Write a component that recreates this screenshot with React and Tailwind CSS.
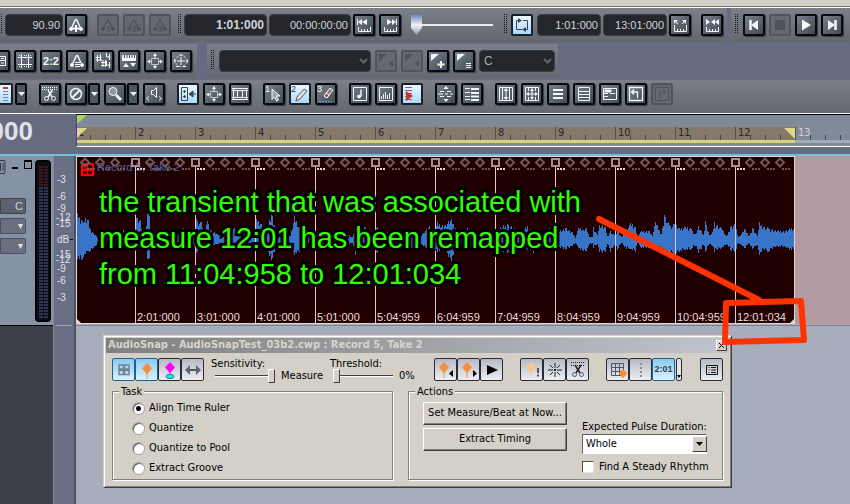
import { useState } from 'react';
import clsx from 'clsx';

// 18x18 toolbar glyphs, drawn with currentColor
const GLYPHS = {
  grid: <path d="M2.5 4.5h13v9h-13zM9.5 4v9M2 8.5h13M5 6.5h3M11 6.5h3M5 11h3M11 11h3" />,
  film: <path d="M2 5.5h14M2 12.5h14M5.5 2v14M12.5 2v14M3.5 3v1M8.5 3v1M10.5 3v1M14.5 3v1M3.5 14v1M8.5 14v1M10.5 14v1M14.5 14v1" />,
  metroPlus: (
    <>
      <path d="M8.5 3.5h1L14 13M8.5 3.5L4 13" strokeWidth="1.5" />
      <circle cx="4" cy="13" r="1.5" fill="currentColor" /><circle cx="14" cy="13" r="1.5" fill="currentColor" />
      <path d="M9 9v7M5.5 12.5h7" strokeWidth="2" />
    </>
  ),
  metroLines: (
    <>
      <path d="M8.5 3.5h1L13 11M8.5 3.5L4 13" strokeWidth="1.5" />
      <circle cx="4" cy="13" r="1.5" fill="currentColor" /><circle cx="14" cy="13" r="1.5" fill="currentColor" />
      <path d="M7 10.5h5M7 12.5h5M7 14.5h5" />
    </>
  ),
  sharps: <path d="M3.5 3v7M6.5 2v7M1.5 5.5h6M2 8h6M9 8v7M11.5 8v7M7 10.5h6M7 13.5h6M12.5 1v4h4M15.5 2v6M12.5 9v4h4M15.5 10v6" />,
  keys: (
    <>
      <path d="M2.5 3.5h13v5h-13z" fill="currentColor" />
      <path d="M4.5 3v3M7 3v3M9.5 3v3M12 3v3M14.5 3v3" stroke="#46505a" />
      <path d="M3 15l3-4 3 4zM10 11h6l-3 4z" fill="currentColor" stroke="none" />
    </>
  ),
  boxArrows: (
    <>
      <path d="M5.5 6.5h7v6h-7z" stroke="#c4c8cc" />
      <path d="M9 1l2 3H7zM9 17l2-3H7zM1 9.5l3-2v4zM17 9.5l-3-2v4z" fill="currentColor" stroke="none" />
      <path d="M9 3v3M9 13v3M2 9.5h3M13 9.5h3" />
    </>
  ),
  circleArrows: (
    <>
      <circle cx="9" cy="9" r="5.5" stroke="#c4c8cc" strokeDasharray="3 1" />
      <path d="M9 5v8M5 9h8M7.5 3h3M2.5 7.5v3M15.5 7.5v3M4 14.5h3M11 14.5h3" />
    </>
  ),
  scissors: (
    <>
      <path d="M1 2.5h16M1 4.5h16" strokeDasharray="1 1" />
      <path d="M7 5l4 7M11.5 5L7 12" strokeWidth="1.5" />
      <circle cx="5.5" cy="13.5" r="2" /><circle cx="12.5" cy="13.5" r="2" />
    </>
  ),
  mute: <><circle cx="9" cy="9" r="5.5" strokeWidth="1.5" /><path d="M5.5 12.5l7-7" strokeWidth="2" /></>,
  zoom: <><circle cx="7" cy="6.5" r="4" fill="#8e98a2" /><path d="M10 10l5 5" strokeWidth="3" /></>,
  speaker: <path d="M6.5 5.5h2l3-3v10l-3-3h-2zM4 11.5l-2.5 2L4 15.5M14 11.5l2.5 2-2.5 2" />,
  dock: <><path d="M2.5 2.5h6v13h-6z" /><path d="M4 6.5h3M5.5 5v3M4 11.5h3M5.5 10v3M11 9h6" /><path d="M10 9l4-3v6z" fill="currentColor" /></>,
  strip: <path d="M1 3.5h16M1 5.5h16M1 12.5h16M1 14.5h16M2.5 3v12M6.5 6v7M11.5 6v7M15.5 3v12" />,
  select: <><text x="0" y="7" fontSize="9" stroke="none" fill="currentColor">1</text><path d="M7 4l8 7h-3.5l2 4-2 1-2-4L7 14.500z" fill="#9aa2aa" /></>,
  pencil: <><text x="0" y="7" fontSize="9" stroke="none" fill="#333">2</text><path d="M5 16l1-4 7-8 3 2-7 8z" fill="#dde2e8" stroke="#555e66" /></>,
  eraser: (
    <>
      <text x="0" y="7" fontSize="9" stroke="none" fill="currentColor">3</text>
      <path d="M7 11l6-8 3 2-6 8z" fill="#8a8488" /><path d="M7 11l2-3 3 2-2 3z" fill="#a04040" />
      <path d="M2 16.5h13" stroke="#5b9be0" strokeDasharray="2 1" />
    </>
  ),
  note: <><path d="M2.5 2.5h13v13h-13z" /><path d="M10 4.500v7" strokeWidth="1.5" /><circle cx="8" cy="11.5" r="1.5" fill="currentColor" /></>,
  bars: <path d="M2.5 2.5h13v13h-13zM4.500 11v3M6.5 9v5M8.5 7v7M10.5 10v4M12.5 8v6" />,
  record: <><path d="M2 2.5h7M2 5.5h7M2 8.5h7M2 11.5h7M2 14.5h7" stroke="#b05060" /><path d="M3 6l7 5-7 5z" fill="#c03828" stroke="none" /></>,
  spread: <><path d="M3 6.5h4M10 6.5h4M1 9h5M8 9h3M13 9h3M3 11.5h4M10 11.500h4" /><path d="M9 1l2.5 3h-5zM9 17l2.5-3h-5z" fill="currentColor" stroke="none" /></>,
  stack: <><path d="M2 3.5h5M2 7.5h5M2 11.5h5M2 14.5h5" /><path d="M8 4h8M8 8h8M8 11.5h8M8 15h8" strokeWidth="2" /></>,
  fitV: <><path d="M2.5 2.5h13v13h-13zM9 5v8M5.5 3v12M12.500 3v12" /><path d="M9 3l2.5 3h-5zM9 15l2.5-3h-5z" fill="currentColor" stroke="none" /></>,
  fitAll: <><path d="M2.5 2.5h13v13h-13zM9 4v10M4 9h10" /><path d="M9 3l2 3H7zM9 15l2-3H7zM3 9l3-2v4zM15 9l-3-2v4z" fill="currentColor" stroke="none" /><path d="M5.500 3v3M12.500 3v3M5.500 12v3M12.500 12v3" /></>,
  lines: <path d="M4 5h10M4 9h10M4 13h10" strokeWidth="2" />,
  boxLines: <path d="M3.5 2.5h11v13h-11zM4 6.5h10M4 9.5h10M4 12.5h10" />,
  boxSplit: <><path d="M2.5 3.5h13v11h-13zM3 8.5h4M9 8.5h5M3 11.5h4" /><path d="M4 5h6v2H4z" fill="currentColor" /></>,
  boxBack: <path d="M2.5 2.5h13v13h-13zM10.5 13V7h-6M7 4.500L4.500 7 7 9.500" strokeWidth="1.3" />,
  boxForward: <path d="M2.5 2.5h13v13h-13zM6.5 13V7h6M10 4.500L12.500 7 10 9.500" />,
  rulerBack: <><path d="M3.5 11v4.500h12V11M6.5 13v2M9.5 13v2M12.5 13v2M2.500 3v6" /><path d="M7 3v6L3 6zM12 3v6L7 6z" fill="currentColor" stroke="none" /></>,
  rulerForward: <><path d="M3.5 11v4.500h12V11M6.5 13v2M9.5 13v2M12.5 13v2M15.5 3v6" /><path d="M6 3v6l5-3zM11 3v6l4-3z" fill="currentColor" stroke="none" /></>,
  rulerOut: <><path d="M3.5 9v6.500h12V9M6.5 13v2M9.5 13v2M12.5 13v2M7 8L4 5M11 8l3-3" /><path d="M3 4h4L3 8zM15 4h-4l4 4z" fill="currentColor" stroke="none" /></>,
  rulerIn: <><path d="M3.5 11v4.500h12V11M6.5 13v2M9.5 13v2M12.5 13v2" /><path d="M3 3l4 3-4 3zM12 3v6L8 6zM16 3v6l-4-3z" fill="currentColor" stroke="none" /></>,
  corner: <path d="M2 2h8l-8 8zM16 8v7l-4-3.5z" fill="currentColor" stroke="none" />,
  cornerPlus: <><path d="M2 2h8l-8 7z" fill="currentColor" stroke="none" /><path d="M12 9v7M8.5 12.5h7" strokeWidth="2" /></>,
  cornerLines: <><path d="M2 2h8l-8 7z" fill="currentColor" stroke="none" /><path d="M11 11.5h5M11 13.5h5M11 15.5h5" /></>,
  loop: <><path d="M9 13.5H3.5v-9H8M10 4.5h4.5v9H13" /><path d="M5 2l4 2.500-4 2.500zM13 11v5l-4-2.500z" fill="currentColor" stroke="none" /></>,
  start: <><path d="M5.500 4v10" strokeWidth="2.5" /><path d="M13 4v10L6 9z" fill="currentColor" stroke="none" /></>,
  end: <><path d="M12.500 4v10" strokeWidth="2.5" /><path d="M5 4v10l7-5z" fill="currentColor" stroke="none" /></>,
  stop: <path d="M4 4h10v10H4z" fill="currentColor" stroke="none" />,
  play: <path d="M5 3.500v11L14 9z" fill="currentColor" stroke="none" />,
  rows: (
    <>
      <path d="M3 3h4M10 3h5" stroke="#b04050" strokeWidth="2" />
      <path d="M3 6.5h4M10 6.5h5M3 9.5h4M10 9.5h5M3 12.5h4M10 12.5h5M3 15.5h4M10 15.5h5" stroke="#7a8894" />
    </>
  ),
};

const metroNumber = (n) => (
  <>
    <path d="M9 3.5L14 13M9 3.5L4 13" strokeWidth="1.5" />
    <circle cx="4" cy="13" r="1.5" fill="currentColor" /><circle cx="14" cy="13" r="1.5" fill="currentColor" />
    <text x="7" y="16" fontSize="8" fontWeight="bold" stroke="none" fill="currentColor">{n}</text>
  </>
);

const ToolButton = ({ icon, label, on, off, children }) => (
  <button
    aria-label={label || icon}
    disabled={off}
    className={clsx(
      'h-[22px] w-[22px] shrink-0 rounded-xs border-2',
      on && 'border-[#17202a] bg-linear-to-b from-[#edf8ff] to-[#a9dafa] text-[#3d4650]',
      off && 'border-[#50545c] bg-[#64686f] text-[#4e5259]',
      !on && !off && 'border-[#08090b] bg-linear-to-br from-[#77818b] to-[#414b55] text-[#f4f6f8] shadow-[1px_1px_1px_#3a3d45]'
    )}
  >
    {children || (
      <svg viewBox="0 0 18 18" className="h-[18px] w-[18px]" fill="none" stroke="currentColor" fontFamily="Liberation Sans, sans-serif">
        {GLYPHS[icon]}
      </svg>
    )}
  </button>
);

const MiniDrop = ({ label }) => (
  <button aria-label={label} className="flex h-[22px] w-3 shrink-0 items-center justify-center rounded-xs border-2 border-[#08090b] bg-[#4d5762]">
    <svg viewBox="0 0 7 4" className="w-[7px] shrink-0"><path d="M0 0h7L3.5 4z" fill="#f0f2f4" /></svg>
  </button>
);

const Grip = () => (
  <span className="h-5 w-[5px] shrink-0 self-start bg-[conic-gradient(#15171b_25%,transparent_0)] bg-[size:2px_2px]" />
);

const LcdField = ({ label, value, bold, className }) => (
  <input
    aria-label={label}
    defaultValue={value}
    className={clsx(
      "h-[22px] shrink-0 rounded-sm border border-[#3c3e46] bg-[#24262c] pr-[2px] text-right font-['Liberation_Sans',sans-serif] text-[#d2d4dc] outline-none",
      bold ? 'text-[12px] font-bold' : 'text-[11px]',
      className
    )}
  />
);

const LcdSelect = ({ label, value, className }) => (
  <span className={clsx('relative flex shrink-0', className)}>
    <select aria-label={label} defaultValue={value} className="h-[22px] w-full appearance-none rounded-sm border border-[#3c3e46] bg-[#24262c] pl-1 font-['Liberation_Sans',sans-serif] text-[12px] text-[#a9abb2] outline-none">
      <option>{value}</option>
    </select>
    <svg viewBox="0 0 9 6" className="pointer-events-none absolute top-2 right-[3px] w-[9px]">
      <path d="M1 1l3.5 3.5L8 1" fill="none" stroke="#666870" strokeWidth="2" />
    </svg>
  </span>
);

const PANEL = 'bg-linear-to-b from-[#7b7f88] to-[#64676e]';

const TransportBar = () => (
  <div className="flex h-[34px] gap-1">
    <div className={clsx('flex shrink-0 items-start gap-[2px] pt-[6px] pr-1', PANEL)}>
      <span className="flex w-[3px] overflow-hidden"><Grip /></span>
      <LcdField label="Tempo" value="90.90" className="w-[58px]" />
      <ToolButton icon="metroPlus" label="Insert tempo" />
      <div className="ml-2 flex gap-1">
        {['1', '2', '3'].map(n => (
          <ToolButton key={n} off label={`Tempo ratio ${n}`}>
            <svg viewBox="0 0 18 18" className="h-[18px] w-[18px]" fill="none" stroke="currentColor">{metroNumber(n)}</svg>
          </ToolButton>
        ))}
      </div>
      <div className="ml-1 flex gap-[2px]">
        <Grip />
        <LcdField label="Now time" value="1:01:000" bold className="w-[83px]" />
        <LcdField label="SMPTE time" value="00:00:00:00" className="w-[82px]" />
      </div>
      <div className="flex gap-1">
        <ToolButton icon="rulerBack" />
        <ToolButton icon="rulerForward" />
      </div>
      <input
        type="range"
        aria-label="Position"
        defaultValue="0"
        className="ml-2 h-[22px] w-[84px] appearance-none bg-[linear-gradient(#e8eaee,#e8eaee)] bg-[size:80px_2px] bg-center bg-no-repeat [&::-webkit-slider-thumb]:h-[20px] [&::-webkit-slider-thumb]:w-[11px] [&::-webkit-slider-thumb]:appearance-none [&::-webkit-slider-thumb]:bg-linear-to-b [&::-webkit-slider-thumb]:from-[#6f88b8] [&::-webkit-slider-thumb]:via-[#f2f4f8] [&::-webkit-slider-thumb]:to-[#8a9ab8] [&::-webkit-slider-thumb]:[clip-path:polygon(0_0,100%_0,100%_65%,50%_100%,0_65%)]"
      />
      <div className="ml-[6px] flex gap-[3px]">
        <Grip />
        <ToolButton icon="loop" label="Loop" on />
      </div>
      <LcdField label="Loop start" value="1:01:000" className="ml-[2px] w-16" />
      <LcdField label="Loop end" value="13:01:000" className="w-16" />
      <div className="flex gap-[10px]">
        <ToolButton icon="rulerOut" />
        <ToolButton icon="rulerIn" />
      </div>
    </div>
    <div className={clsx('flex flex-1 gap-1 pt-[6px] pl-[3px]', PANEL)}>
      <Grip />
      <ToolButton icon="start" label="Rewind" />
      <ToolButton icon="stop" label="Stop" off />
      <ToolButton icon="play" label="Play" />
      <ToolButton icon="end" label="Go to end" />
    </div>
  </div>
);

const ViewBar = () => (
  <div className="mt-[2px] flex h-[34px] gap-[10px]">
    <div className={clsx('flex w-[197px] shrink-0 pt-[6px]', PANEL)}>
      <div className="-ml-3 flex gap-1">
        <ToolButton icon="grid" />
        <ToolButton icon="film" />
        <ToolButton label="Ratio">
          <span className="block text-center font-['Liberation_Sans',sans-serif] text-[11px] leading-[18px] font-bold">2:2</span>
        </ToolButton>
        <ToolButton icon="metroLines" />
        <ToolButton icon="sharps" />
        <ToolButton icon="keys" />
        <ToolButton icon="boxArrows" />
        <ToolButton icon="circleArrows" />
      </div>
    </div>
    <div className={clsx('flex gap-1 pt-[6px] pr-[3px] pl-[3px]', PANEL)}>
      <Grip />
      <LcdSelect label="Preset" value="" className="w-[152px]" />
      <ToolButton icon="corner" label="Previous marker" off />
      <ToolButton icon="corner" label="Next marker" off />
      <ToolButton icon="cornerPlus" label="Insert marker" />
      <ToolButton icon="cornerLines" label="Marker list" />
      <LcdSelect label="Key" value="C" className="w-[76px]" />
    </div>
  </div>
);

const EditBar = () => (
  <div className={clsx('mt-[2px] flex h-[33px] pt-[3px]', PANEL)}>
    <div className="-ml-[9px] flex gap-3">
      <div className="flex gap-[2px]">
        <ToolButton icon="rows" on />
        <MiniDrop label="View options" />
      </div>
      <div className="flex gap-1">
        <ToolButton icon="scissors" />
        <div className="flex gap-px"><ToolButton icon="mute" /><MiniDrop label="Mute options" /></div>
        <div className="flex gap-px"><ToolButton icon="zoom" /><MiniDrop label="Zoom options" /></div>
        <ToolButton icon="speaker" />
      </div>
      <div className="flex gap-1">
        <ToolButton icon="dock" on />
        <ToolButton icon="boxArrows" />
        <ToolButton icon="strip" />
      </div>
      <div className="flex gap-1">
        <ToolButton icon="select" />
        <ToolButton icon="pencil" on />
        <ToolButton icon="eraser" />
      </div>
      <div className="flex gap-1">
        <ToolButton icon="note" />
        <ToolButton icon="bars" />
        <ToolButton icon="record" on />
      </div>
      <div className="flex gap-1">
        <ToolButton icon="spread" />
        <ToolButton icon="stack" />
      </div>
      <div className="flex gap-1">
        <ToolButton icon="fitV" />
        <ToolButton icon="fitAll" />
        <ToolButton icon="lines" />
        <ToolButton icon="boxLines" />
        <ToolButton icon="boxSplit" />
        <ToolButton icon="boxBack" />
        <ToolButton icon="boxForward" off />
      </div>
    </div>
  </div>
);

const MEASURES = ['1', '2', '3', '4', '5', '6', '7', '8', '9', '10', '11', '12', '13'];

const TimeRuler = () => (
  <div className="flex h-[41px] border-t border-white bg-[#666b80]">
    <div className="flex w-[76px] shrink-0 justify-end pr-[43px] font-['Liberation_Sans',sans-serif] text-[26px] leading-[34px] font-bold text-[#e0e1e8]">
      1:01:000
    </div>
    <div className="relative h-[33px] min-w-0 flex-1 overflow-hidden border-t border-b border-t-black border-b-white border-l border-l-[#5a28d0] bg-[#808a99] pt-3">
      <div className="-ml-[2px] flex">
        {MEASURES.map(m => (
          <div
            key={m}
            className={clsx(
              "flex h-4 w-[60px] shrink-0 border-b-[3px] font-['DejaVu_Sans_Condensed','DejaVu_Sans',sans-serif] text-[11px] leading-[11px]",
              m === '13' ? 'border-[#a0abbb] text-[#dcd0d4]' : 'border-[#d8d27a] bg-[#85796a] text-[#2b2824]'
            )}
          >
            <span className="w-[15px] border-l border-[#5b5145] pl-[2px]">{m}</span>
            <span className="mt-2 w-[15px] border-l border-[#4b4540]" />
            <span className="mt-2 w-[15px] border-l border-[#4b4540]" />
            <span className="mt-2 w-[15px] border-l border-[#4b4540]" />
          </div>
        ))}
      </div>
      <svg viewBox="0 0 730 28" className="absolute top-0 left-0 h-7 w-[730px]">
        <path d="M0 0h10L0 9z" fill="#a6e03c" />
        <path d="M0 13h10L0 23zM707 13h11v11z" fill="#dcd98c" />
      </svg>
    </div>
  </div>
);

// x offset in the clip, peak above and peak below the centre line
const PEAKS = [
  [0, 27, 19], [4, 20, 20], [6, 17, 17], [8, 22, 14], [11, 20, 11], [12, 12, 12], [15, 8, 9], [18, 5, 6], [21, 1, 1], [26, 4, 3],
  [36, 3, 3], [46, 10, 4], [50, 5, 5], [58, 3, 4], [59, 22, 10], [63, 20, 8], [65, 6, 5], [68, 11, 8], [70, 26, 19], [72, 24, 18], [73, 5, 6],
  [78, 2, 2], [98, 3, 3], [106, 12, 7], [110, 6, 9], [116, 4, 4], [119, 21, 13], [124, 18, 8], [127, 5, 4], [130, 19, 11], [134, 9, 6],
  [140, 6, 4], [147, 5, 10], [152, 6, 4], [157, 12, 5], [164, 5, 5], [173, 10, 8], [177, 6, 6], [179, 21, 8], [184, 16, 8], [188, 7, 6],
  [194, 26, 20], [197, 15, 12], [200, 7, 8], [207, 9, 9], [213, 4, 5], [217, 24, 15], [222, 13, 12], [225, 8, 4], [234, 4, 4], [248, 9, 7],
  [258, 4, 5], [267, 8, 5], [275, 3, 3], [278, 15, 15], [281, 6, 5], [287, 13, 9], [294, 6, 5], [300, 13, 13], [306, 7, 6], [316, 10, 10],
  [324, 5, 5], [334, 10, 8], [343, 4, 5], [352, 14, 9], [356, 5, 5], [360, 18, 12], [367, 14, 9], [374, 21, 21], [378, 12, 10], [384, 6, 5],
  [390, 12, 8], [398, 5, 5], [406, 9, 6], [414, 5, 4], [420, 11, 8], [430, 16, 13], [434, 14, 9], [442, 6, 5], [450, 14, 10], [456, 8, 13],
  [464, 5, 6], [472, 12, 9], [480, 9, 8], [488, 12, 9], [495, 8, 6], [498, 2, 3], [501, 12, 8], [506, 10, 11], [509, 12, 11], [512, 3, 4],
  [515, 3, 3], [516, 13, 8], [520, 5, 4], [522, 15, 12], [528, 13, 12], [530, 4, 4], [533, 9, 12], [537, 5, 5], [540, 10, 10], [544, 3, 3],
  [549, 11, 9], [553, 17, 9], [558, 13, 12], [560, 4, 3], [564, 9, 8], [572, 9, 8], [575, 4, 4], [578, 18, 11], [584, 6, 8], [587, 25, 12],
  [592, 15, 13], [597, 16, 14], [602, 12, 12], [608, 13, 10], [614, 11, 9], [618, 6, 6], [621, 14, 13], [626, 5, 5], [628, 19, 12],
  [632, 5, 4], [635, 8, 6], [637, 18, 12], [644, 12, 8], [649, 4, 4], [653, 13, 10], [658, 16, 12], [661, 3, 3], [667, 11, 8], [672, 5, 4],
  [675, 12, 9], [680, 4, 5], [682, 18, 15], [686, 13, 9], [691, 12, 12], [698, 10, 7], [706, 9, 7], [714, 12, 10], [717, 13, 10],
];

const waveform = () => {
  let d = '';
  for (let i = 0; i < PEAKS.length - 1; i++) {
    const [x0, u0, l0] = PEAKS[i];
    const [x1, u1, l1] = PEAKS[i + 1];
    for (let x = x0; x < x1; x++) {
      const t = (x - x0) / (x1 - x0);
      const jag = x === x0 ? 1 : 0.72 + ((x * 37) % 11) / 30;
      const up = Math.max(1, Math.round((u0 + (u1 - u0) * t) * jag));
      const low = Math.max(1, Math.round((l0 + (l1 - l0) * t) * jag));
      d += `M${x} ${83 - up}h1v${up + low}h-1z`;
    }
  }
  return d;
};

// marker centres; the first three sit a little ahead of the grid
const BEATS = [...Array(47).keys()].map(i => ({ x: (i + 1) * 15 - (i < 3 ? 7 : 2), bar: (i + 1) % 4 === 0 }));

const LABELS = ['', '2:01:000', '3:01:000', '4:01:000', '5:01:000', '5:04:959', '6:04:959', '7:04:959', '8:04:959', '9:04:959', '10:04:959', '12:01:034'];

const AudioClip = () => (
  <div className="relative flex h-[168px] w-[719px] shrink-0 flex-col justify-end overflow-hidden border border-[#ecd0d2] bg-[#200000]">
    <div className="absolute top-[5px] left-1 flex items-start gap-[3px]">
      <svg viewBox="0 0 13 13" className="mt-px h-[13px] w-[13px]">
        <path d="M0 0h13v13H0z" fill="#f00" />
        <path d="M2 2h4v3H4v1H2zM7 2h4v4H9V5H7zM2 8h4v3H2zM7 8h4v3H7z" fill="#400" />
      </svg>
      <span className="font-['Liberation_Sans',sans-serif] text-[11px] leading-[10px] text-[#4067b8]">Record 5, Take 2</span>
    </div>
    <svg viewBox="0 0 717 166" className="absolute top-0 left-0 h-[166px] w-[717px]" fill="none">
      <path d={waveform()} fill="#3874c8" shapeRendering="crispEdges" />
      {BEATS.map(({ x, bar }) => (bar ? (
        <g key={x} shapeRendering="crispEdges">
          <path d={`M${x}.5 10v156`} stroke="#e6c4c8" />
          <path d={`M${x - 3} 2h7v7h-7z`} stroke="#b08c8e" strokeWidth="2" />
          <path d={`M${x + 2} 12h8`} stroke="#e8d0d0" strokeWidth="2" strokeDasharray="2 1" />
        </g>
      ) : (
        <g key={x}>
          <path d={`M${x} 1.5l4 4-4 4-4-4z`} stroke="#785456" strokeWidth="2" />
          <path d={`M${x + 2} 12h8`} stroke="#785456" strokeWidth="2" strokeDasharray="2 1" shapeRendering="crispEdges" />
        </g>
      )))}
      <path d="M0 162v4h4zM717 162v4h-4z" fill="#ecd0d2" />
    </svg>
    <div className="relative flex">
      {LABELS.map((label, i) => (
        <span
          key={i}
          className="w-[60px] shrink-0 font-['Liberation_Sans',sans-serif] text-[11px] leading-[12px] whitespace-nowrap text-[#f0d8dc]"
        >
          {label}
        </span>
      ))}
    </div>
  </div>
);

const DB_MARKS = [[24, '-3'], [41, '-6'], [53, '-9'], [62, '-12'], [68, '-15'], [84, 'dB'], [99, '-15'], [104, '-12'], [113, '-9'], [125, '-6'], [142, '-3']];

const TrackHeader = () => (
  <div className="flex h-[169px] w-[53px] shrink-0 justify-between bg-[#8692a5]">
    <div className="flex flex-col">
      <div className="flex items-start gap-[6px] pt-1">
        <svg viewBox="0 0 6 14" className="h-[14px] w-[6px]"><path d="M0 .5h4q1 0 1 1v11q0 1-1 1H0M.5 3v8M3 3v8" fill="none" stroke="#333844" /></svg>
        <button aria-label="Minimize" className="mt-[7px] h-[2px] w-[6px] bg-black" />
        <button aria-label="Restore" className="-mr-1 h-[9px] w-2 border border-t-2 border-black" />
      </div>
      <button className="mt-6 flex h-4 w-[26px] items-center justify-end rounded-r-xs border border-[#3e4350] bg-[#5c6070] pr-[2px] font-['Liberation_Sans',sans-serif] text-[11px] text-[#d0d2da]">C</button>
      {['Input', 'Output'].map(name => (
        <button key={name} aria-label={name} className="mt-1 flex h-4 w-[26px] items-center justify-end rounded-r-xs border border-[#4a5060] bg-[#6a7082] pr-[2px]">
          <svg viewBox="0 0 5 5" className="w-[5px]"><path d="M0 0h5L2.5 5z" fill="#e0e2e8" /></svg>
        </button>
      ))}
    </div>
    <div className="mt-1 mr-[2px] flex h-[162px] w-4 justify-center gap-px rounded-sm border-2 border-black bg-[#0c0f18] pt-1">
      {[0, 1].map(n => (
        <div key={n} className="h-[152px] w-1 bg-[repeating-linear-gradient(transparent_0_2px,#0c0f18_2px_3px),linear-gradient(#45141c_0_20px,#2c3650_20px)]" />
      ))}
    </div>
  </div>
);

const TaskIcon = ({ children }) => (
  <svg viewBox="0 0 20 20" className="h-5 w-5 shrink-0" fill="none" stroke="#50545c">{children}</svg>
);

const SnapButton = ({ label, on, children }) => (
  <button
    aria-label={label}
    className={clsx(
      'flex h-[23px] w-[23px] shrink-0 items-center justify-center rounded-xs border',
      on ? 'border-[#1b6492] bg-linear-to-b from-[#8ac9ee] to-[#dcf2fd]' : 'border-[#2b2d36] bg-linear-to-b from-[#b6bac6] to-[#eeeef2]'
    )}
  >
    {children}
  </button>
);

const Slider = ({ label, value }) => (
  <input
    type="range"
    aria-label={label}
    defaultValue={value}
    className="h-[14px] w-[60px] appearance-none bg-[linear-gradient(#404040_0_1px,#fff_1px)] bg-[size:100%_2px] bg-center bg-no-repeat [&::-webkit-slider-thumb]:h-[14px] [&::-webkit-slider-thumb]:w-[7px] [&::-webkit-slider-thumb]:appearance-none [&::-webkit-slider-thumb]:border [&::-webkit-slider-thumb]:border-t-white [&::-webkit-slider-thumb]:border-r-[#404040] [&::-webkit-slider-thumb]:border-b-[#404040] [&::-webkit-slider-thumb]:border-l-white [&::-webkit-slider-thumb]:bg-[#d4d0c8]"
  />
);

const GroupBox = ({ title, className, children }) => (
  <fieldset className={clsx('relative h-[89px] border border-[#808080] shadow-[1px_1px_0_#fff,inset_1px_1px_0_#fff]', className)}>
    <legend className="absolute -top-[6px] left-[6px] bg-[#d4d0c8] px-[2px] leading-3">{title}</legend>
    {children}
  </fieldset>
);

const TASKS = ['Align Time Ruler', 'Quantize', 'Quantize to Pool', 'Extract Groove'];

const AudioSnapDialog = () => {
  const [task, setTask] = useState(TASKS[0]);

  return (
    <section className="w-[629px] border border-t-[#d4d0c8] border-r-[#404040] border-b-[#404040] border-l-[#d4d0c8] bg-[#d4d0c8] font-['DejaVu_Sans_Condensed','DejaVu_Sans',sans-serif] text-[11px] text-black shadow-[inset_1px_1px_0_#fff,inset_-1px_-1px_0_#808080]">
      <header className="mx-[2px] mt-[2px] flex h-[15px] items-center justify-between bg-linear-to-r from-[#808080] to-[#c0c4ce] pr-[2px] pl-[2px]">
        <h2 className="font-bold whitespace-nowrap text-[#d8d4cc]">AudioSnap - AudioSnapTest_03b2.cwp : Record 5, Take 2</h2>
        <button aria-label="Close" className="flex h-[11px] w-[11px] items-center justify-center border border-t-white border-r-[#404040] border-b-[#404040] border-l-white bg-[#d4d0c8]">
          <svg viewBox="0 0 7 7" className="w-[7px] shrink-0"><path d="M1 1l5 5M6 1L1 6" stroke="#000" /></svg>
        </button>
      </header>

      <div className="mt-[5px] flex items-start pr-2 pl-2">
        <div className="flex">
          <SnapButton label="Snap grid" on><TaskIcon><path d="M5 5h4.500v4H5zM10.500 5H15v4h-4.500zM5 10.500h4.500v4H5zM10.500 10.500H15v4h-4.500z" stroke="#6c8498" strokeWidth="1.5" /></TaskIcon></SnapButton>
          <SnapButton label="Show transients" on><TaskIcon><path d="M10 3l5 5.500-5 5.500-5-5.500z" fill="#f59038" stroke="none" /><path d="M10 12v7" stroke="#f59038" /></TaskIcon></SnapButton>
          <SnapButton label="Pool"><TaskIcon><path d="M10 2l5 5.500-5 5.500-5-5.500z" fill="#f0f" stroke="none" /><path d="M10 12v4" stroke="#f0f" /><ellipse cx="10" cy="16.500" rx="4" ry="2" stroke="#207890" fill="#20f0f8" /></TaskIcon></SnapButton>
          <SnapButton label="Stretch"><TaskIcon><path d="M5 10h10" strokeWidth="2" /><path d="M2 10l5-5v10zM18 10l-5-5v10z" fill="#606468" stroke="none" /></TaskIcon></SnapButton>
        </div>
        <div className="ml-[7px] w-[119px]">
          <p className="leading-[11px]">Sensitivity:</p>
          <div className="flex items-center gap-[6px] pl-1 leading-[14px]"><Slider label="Sensitivity" value="100" />Measure</div>
        </div>
        <div className="w-[104px]">
          <p className="leading-[11px]">Threshold:</p>
          <div className="flex items-center gap-[6px] pl-[3px] leading-[14px]"><Slider label="Threshold" value="0" />0%</div>
        </div>
        <div className="flex">
          <SnapButton label="Previous transient"><TaskIcon><path d="M8 2l5 5.500-5 5.500-5-5.500z" fill="#f59038" stroke="none" /><path d="M8 11v7" stroke="#f59038" /><path d="M17 10v7l-4-3.500z" fill="#000" stroke="none" /></TaskIcon></SnapButton>
          <SnapButton label="Next transient"><TaskIcon><path d="M8 2l5 5.500-5 5.500-5-5.500z" fill="#f59038" stroke="none" /><path d="M8 11v7" stroke="#f59038" /><path d="M14 10v7l4-3.500z" fill="#000" stroke="none" /></TaskIcon></SnapButton>
          <SnapButton label="Play"><TaskIcon><path d="M5 5v10l11-5z" fill="#000" stroke="none" /></TaskIcon></SnapButton>
        </div>
        <div className="ml-[17px] flex">
          <SnapButton label="Promote"><TaskIcon><path d="M9 2l5 5.500-5 5.500-5-5.500z" fill="#f8c890" stroke="none" /><path d="M9 11v7" stroke="#f8c890" /><path d="M16 8v5M16 14.500v2" strokeWidth="2" /></TaskIcon></SnapButton>
          <SnapButton label="Reset"><TaskIcon><path d="M10 3v5M10 12v5M3 10h5M12 10h5M5 5l3 3M12 12l3 3M15 5l-3 3M8 12l-3 3" stroke="#222" /><path d="M9 9h2v2H9z" fill="#222" stroke="none" /></TaskIcon></SnapButton>
          <SnapButton label="Split"><TaskIcon><path d="M3 2.500h14M3 5.500h14" strokeDasharray="1 1" stroke="#222" /><path d="M7 5l5 8M13 5l-5 8" stroke="#222" strokeWidth="1.5" /><circle cx="6.500" cy="14.500" r="2" /><circle cx="13.500" cy="14.500" r="2" /></TaskIcon></SnapButton>
        </div>
        <div className="ml-[17px] flex">
          <SnapButton label="Grid"><TaskIcon><path d="M3.500 3.500h12v12h-12zM7.500 3v13M11.500 3v13M3 7.500h13M3 11.500h13" /><path d="M15 9l4.500 4.500L15 18l-4.500-4.500z" fill="#f59038" stroke="none" /></TaskIcon></SnapButton>
          <SnapButton label="Beat lines"><TaskIcon><path d="M10 3v15" stroke="#888c94" strokeWidth="2" strokeDasharray="2 2" /></TaskIcon></SnapButton>
          <SnapButton label="Beat value" on><span className="font-['Liberation_Sans',sans-serif] text-[9px] font-bold text-[#30424e]">2:01</span></SnapButton>
          <button aria-label="Beat value options" className="ml-px flex h-[23px] w-[6px] items-end justify-center rounded-xs border border-[#2b2d36] bg-[#e4e5ea] pb-[2px]">
            <svg viewBox="0 0 4 3" className="w-1 shrink-0"><path d="M0 0h4L2 3z" /></svg>
          </button>
        </div>
        <div className="ml-auto"><SnapButton label="Options"><TaskIcon><path d="M4.500 5.500h11v9h-11zM9 7.500h5M9 10h5M9 12.500h5M6.500 7.500h1M6.500 10h1M6.500 12.500h1" stroke="#111" /></TaskIcon></SnapButton></div>
      </div>

      <div className="mt-2 mb-[7px] flex justify-between px-2">
        <GroupBox title="Task" className="w-[281px]">
          <div className="flex flex-col gap-1 pt-2 pl-5">
            {TASKS.map(name => (
              <label key={name} className="flex h-4 items-center gap-[5px]">
                <input
                  type="radio"
                  name="task"
                  checked={task === name}
                  onChange={() => setTask(name)}
                  className="h-[11px] w-[11px] appearance-none rounded-full bg-white shadow-[inset_1px_1px_0_#606060,0_0_0_1px_#a8a49c] checked:bg-[radial-gradient(#000_2px,#fff_3px)]"
                />
                {name}
              </label>
            ))}
          </div>
        </GroupBox>
        <GroupBox title="Actions" className="w-[315px]">
          <div className="flex gap-[15px] pt-[10px] pl-[14px]">
            <div className="flex flex-col gap-[3px]">
              {['Set Measure/Beat at Now...', 'Extract Timing'].map(action => (
                <button key={action} className="h-[23px] w-[144px] border border-t-white border-r-[#404040] border-b-[#404040] border-l-white bg-[#d4d0c8] whitespace-nowrap shadow-[inset_-1px_-1px_0_#808080]">
                  {action}
                </button>
              ))}
            </div>
            <div className="flex flex-col pt-[18px]">
              <label htmlFor="pulse" className="leading-[14px] whitespace-nowrap">Expected Pulse Duration:</label>
              <div className="relative">
                <select id="pulse" defaultValue="Whole" className="h-5 w-[125px] appearance-none border border-t-[#606060] border-r-white border-b-white border-l-[#606060] bg-white pl-[3px] outline-none">
                  <option>Whole</option>
                  <option>Half</option>
                </select>
                <span className="pointer-events-none absolute top-[2px] right-[2px] flex h-4 w-[15px] items-center justify-center border border-t-white border-r-[#404040] border-b-[#404040] border-l-white bg-[#d4d0c8]">
                  <svg viewBox="0 0 7 4" className="w-[7px]"><path d="M0 0h7L3.5 4z" /></svg>
                </span>
              </div>
              <label className="mt-[6px] flex items-center gap-[5px] leading-[14px] whitespace-nowrap">
                <input type="checkbox" className="h-3 w-3 appearance-none border border-t-[#505050] border-r-[#e8e4dc] border-b-[#e8e4dc] border-l-[#505050] bg-white" />
                Find A Steady Rhythm
              </label>
            </div>
          </div>
        </GroupBox>
      </div>
    </section>
  );
};

export default function App() {
  return (
    <div className="relative flex min-h-screen flex-col overflow-hidden bg-[#666b80]">
      <div className="h-2 border-b border-white bg-[#d4d0c8] shadow-[inset_0_-1px_0_#77756f]" />
      <TransportBar />
      <ViewBar />
      <EditBar />
      <TimeRuler />

      <main className="flex flex-1 border-t-2 border-[#74bde0]">
        <div className="flex w-[53px] shrink-0 flex-col bg-[#3d4049]">
          <TrackHeader />
          <div className="h-px bg-black" />
        </div>
        <div className="w-[23px] shrink-0 border-r-2 border-l border-r-[#4c5167] border-l-[#8089a0] bg-[#686f85]">
          <svg viewBox="0 0 20 169" className="h-[169px] w-5" fontFamily="Liberation Sans, sans-serif" fontSize="10" fill="#e0e0e8">
            {DB_MARKS.map(([y, text]) => <text key={y} x={text.length > 2 ? 2 : 3} y={y + 3}>{text}</text>)}
            <path d="M16 83.500h3" stroke="#000" />
          </svg>
          <div className="mx-[2px] h-px bg-[#98a0b4]" />
        </div>
        <div className="flex min-w-0 flex-1 flex-col bg-[#a7adba]">
          <div className="flex h-[168px] bg-[#b39aa1]">
            <AudioClip />
          </div>
          <div className="mt-px h-px bg-[#788296]" />
          <div className="pt-[9px] pl-[27px]">
            <AudioSnapDialog />
          </div>
        </div>
      </main>

      {/* callout drawn over the arrange view */}
      <p className="absolute top-[184px] left-[99px] font-['Liberation_Sans',sans-serif] text-[29px] leading-[36px] whitespace-nowrap text-[#32ff00] [-webkit-text-stroke:6px_black] [paint-order:stroke_fill]">
        the transient that was associated with<br />
        measure 12:01 has been remapped<br />
        from 11:04:958 to 12:01:034
      </p>
      <svg viewBox="0 0 850 504" className="pointer-events-none absolute top-0 left-0 h-[504px] w-[850px]" fill="none" stroke="#ff3300" strokeWidth="6" strokeLinecap="round" strokeLinejoin="round">
        <path d="M599 219L759 300M726 303L801 301L804 340L725 342L726 303" />
      </svg>
    </div>
  );
}
